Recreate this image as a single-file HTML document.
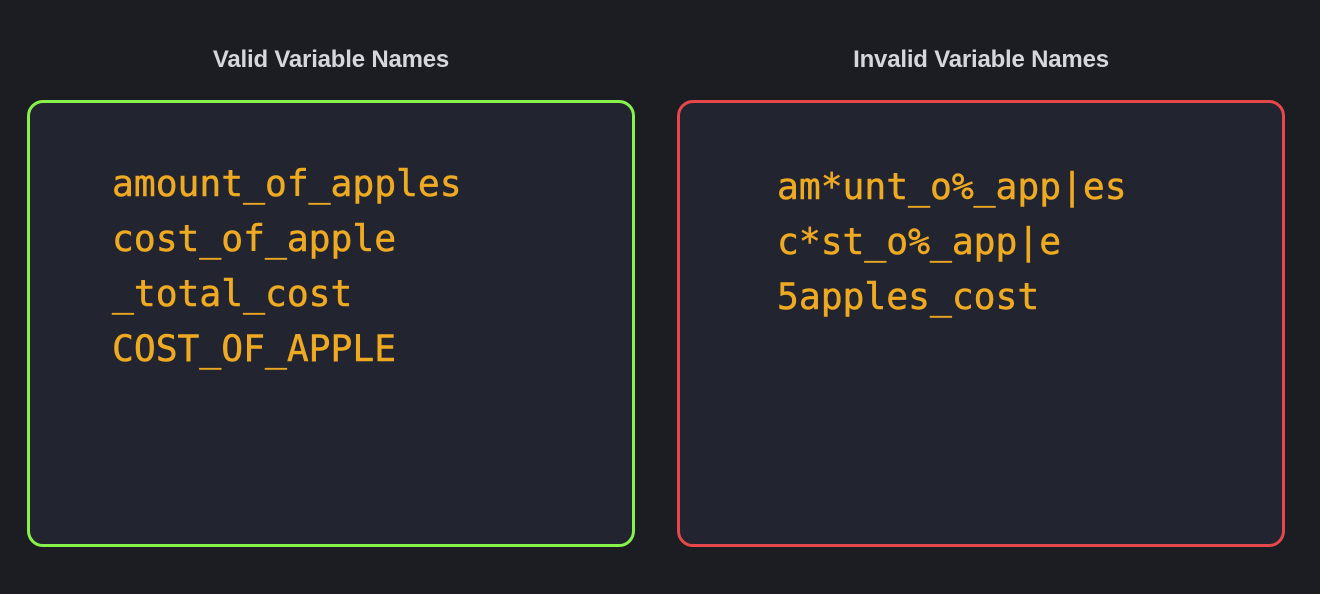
<!DOCTYPE html>
<html><head><style>
html,body{margin:0;padding:0;}
body{width:1320px;height:594px;background:#1c1d22;position:relative;overflow:hidden;font-family:"Liberation Sans",sans-serif;}
.t{position:absolute;top:46px;width:608px;text-align:center;color:#d6d7dc;font-weight:bold;font-size:24px;letter-spacing:-0.2px;}
.box{position:absolute;top:100px;width:602px;height:441px;border:3px solid;border-radius:16px;background:#22242f;}
.code{position:absolute;font-family:"DejaVu Sans Mono","Liberation Mono",monospace;font-size:36.3px;line-height:55px;color:#eeaa22;white-space:pre;-webkit-text-stroke:0.5px #eeaa22;}
</style></head><body>
<div class="t" style="left:27px">Valid Variable Names</div>
<div class="t" style="left:677px">Invalid Variable Names</div>
<div class="box" style="left:27px;border-color:#86f24a"></div>
<div class="box" style="left:677px;border-color:#e6474a"></div>
<div class="code" style="left:112px;top:156px">amount_of_apples
cost_of_apple
_total_cost
COST_OF_APPLE</div>
<div class="code" style="left:777px;top:159px">am*unt_o%_app|es
c*st_o%_app|e
5apples_cost</div>
</body></html>
